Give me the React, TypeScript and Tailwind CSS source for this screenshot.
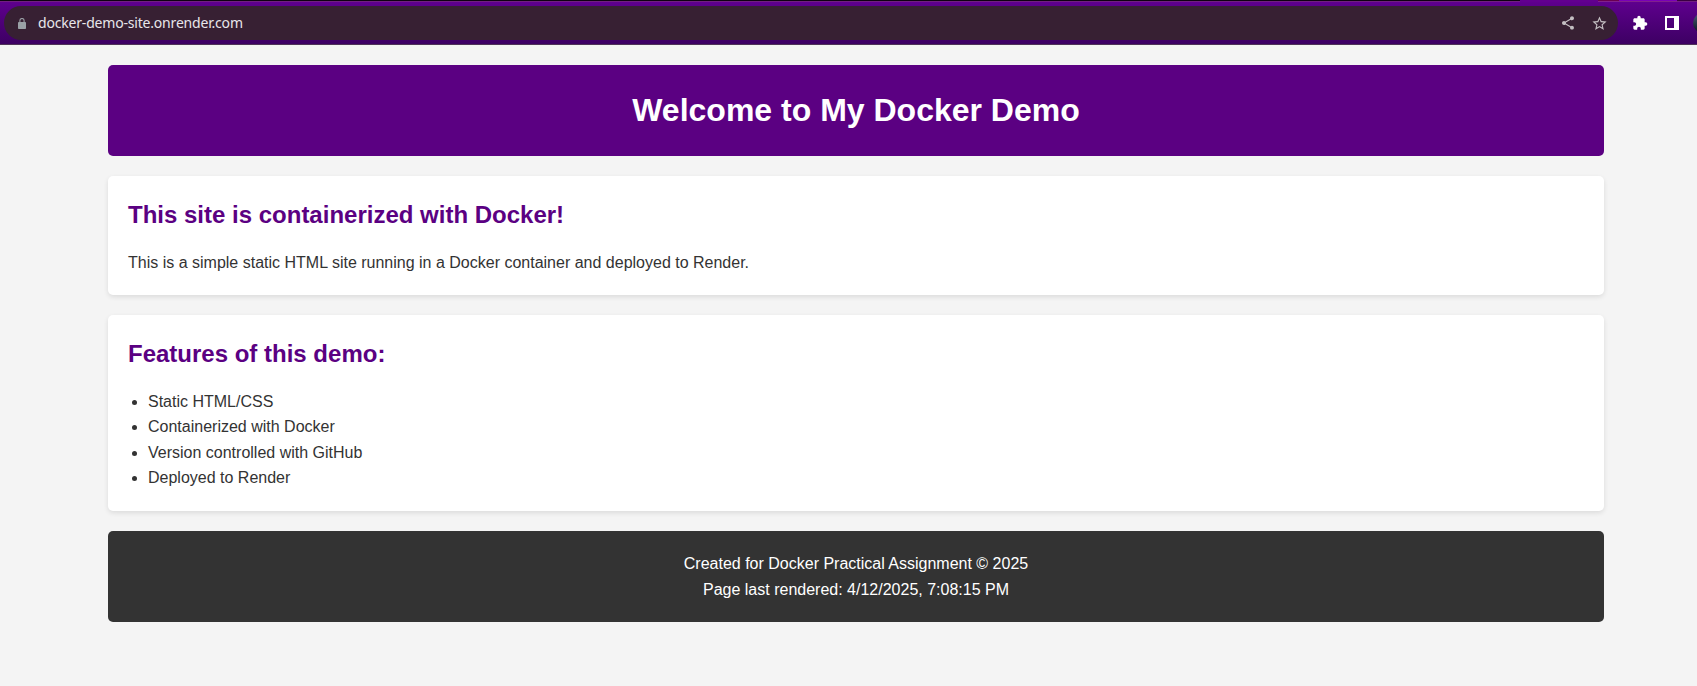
import { MdExtension, MdShare, MdStarBorder } from "react-icons/md";

const features = [
  "Static HTML/CSS",
  "Containerized with Docker",
  "Version controlled with GitHub",
  "Deployed to Render",
];

function LockIcon() {
  return (
    <svg width="8" height="11" viewBox="0 0 8 11" className="block">
      <rect x="0" y="4" width="8" height="7" rx="0.8" fill="#9aa0a6" />
      <path d="M1.9 4.5V2.6a2.1 2.1 0 0 1 4.2 0V4.5" fill="none" stroke="#9aa0a6" strokeWidth="1.1" />
    </svg>
  );
}

function SidePanelIcon() {
  return (
    <svg width="14" height="14" viewBox="0 0 14 14" className="block">
      <path fill="#fff" fillRule="evenodd" d="M0 0H14V14H0ZM2 2V12H9V2Z" />
    </svg>
  );
}

function BrowserBar() {
  return (
    <div className="relative flex h-[45px] shrink-0 items-start overflow-hidden border-b border-[#4f3358] bg-linear-to-b from-[#600090] to-[#3d0063] pt-1.5 pl-1">
      <div className="absolute inset-x-0 top-0 flex h-[2px]">
        <div className="w-[1520px] border-b border-[#701f80] bg-[#0e0311]" />
        <div className="w-[78px] bg-[#62008f]" />
        <div className="w-[21px] border-b border-[#80208c] bg-[#6a0050]" />
        <div className="w-[58px] border-b border-[#80208c] bg-[#7a00b8]" />
        <div className="flex-1 border-b border-[#701f80] bg-[#3a0040]" />
      </div>
      <div className="flex h-[34px] w-[1614px] shrink-0 items-center rounded-full bg-[#372033] pl-[14px]">
        <LockIcon />
        <span className="ml-[12px] font-['Noto_Sans',sans-serif] text-[14px] leading-none tracking-[-0.19px] text-[#e8e6ea]">
          docker-demo-site.onrender.com
        </span>
        <MdShare className="ml-auto size-4 text-[#c3bec2]" />
        <MdStarBorder className="mr-[10px] ml-[15px] size-[17px] text-[#c3bec2]" />
      </div>
      <div className="flex h-[34px] shrink-0 items-center">
        <MdExtension className="ml-[14px] size-4 text-white" />
        <div className="ml-[17px]">
          <SidePanelIcon />
        </div>
        <div className="ml-[14px] size-[20px] rounded-full bg-linear-to-b from-[#4a6078] to-[#0c1420]" />
      </div>
    </div>
  );
}

export default function App() {
  return (
    <div className="flex h-[686px] flex-col overflow-hidden bg-[#f4f4f4] font-['Liberation_Sans',Arial,sans-serif] text-base leading-[1.6] text-[#333]">
      <BrowserBar />
      <div className="mt-5 ml-[108px] flex w-[1496px] flex-col gap-5">
        <header className="rounded-[5px] bg-[#5b0082] p-5 text-center text-white">
          <h1 className="text-[32px] leading-[1.6] font-bold">Welcome to My Docker Demo</h1>
        </header>
        <section className="rounded-[5px] bg-white p-5 shadow-[0_2px_5px_rgba(0,0,0,0.1)]">
          <h2 className="mb-[15px] text-2xl leading-[1.6] font-bold text-[#5b0082]">
            This site is containerized with Docker!
          </h2>
          <p>This is a simple static HTML site running in a Docker container and deployed to Render.</p>
        </section>
        <section className="rounded-[5px] bg-white p-5 shadow-[0_2px_5px_rgba(0,0,0,0.1)]">
          <h2 className="mb-[15px] text-2xl leading-[1.6] font-bold text-[#5b0082]">
            Features of this demo:
          </h2>
          <ul className="ml-5 list-disc">
            {features.map((feature) => (
              <li key={feature}>{feature}</li>
            ))}
          </ul>
        </section>
        <footer className="rounded-[5px] bg-[#333] p-5 text-center text-white">
          <p>Created for Docker Practical Assignment © 2025</p>
          <p>Page last rendered: 4/12/2025, 7:08:15 PM</p>
        </footer>
      </div>
    </div>
  );
}
